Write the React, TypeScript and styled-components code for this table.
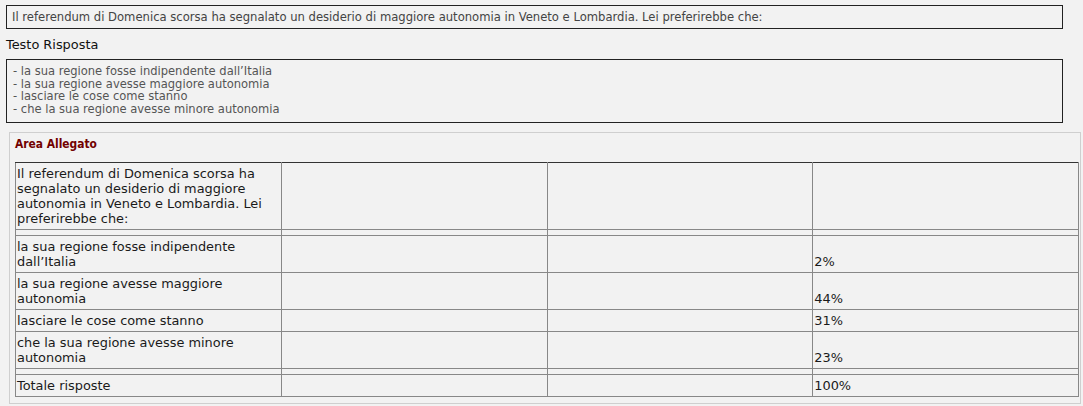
import React from "react";
import styled, { createGlobalStyle } from "styled-components";

const GlobalStyle = createGlobalStyle`
  body {
    margin: 0;
    background: #f2f2f2;
  }
`;

const Page = styled.div`
  padding: 5px 0 0 6px;
  width: 1077px;
  box-sizing: border-box;
`;

const QuestionBox = styled.div`
  width: 1057px;
  height: 24px;
  box-sizing: border-box;
  border: 1px solid #222;
  padding: 0 5px;
  font-family: "DejaVu Sans Condensed", "DejaVu Sans", sans-serif;
  font-size: 12.9px;
  line-height: 22px;
  color: #444;
  white-space: nowrap;
`;

const Label = styled.div`
  margin-top: 8px;
  height: 16px;
  font-family: "DejaVu Sans", sans-serif;
  font-size: 12.9px;
  line-height: 16px;
  color: #111;
`;

const AnswerBox = styled.div`
  margin-top: 6px;
  width: 1057px;
  height: 64px;
  box-sizing: border-box;
  border: 1px solid #222;
  padding: 5px 6px;
  font-family: "DejaVu Sans Condensed", "DejaVu Sans", sans-serif;
  font-size: 12.8px;
  line-height: 12.6px;
  color: #555;
`;

const Panel = styled.section`
  margin: 9px 0 0 3px;
  width: 1072px;
  height: 272px;
  box-sizing: border-box;
  border: 1px solid #cfcfcf;
  padding: 3px 0 0 5px;
`;

const PanelTitle = styled.h3`
  margin: 0;
  height: 26px;
  font-family: "DejaVu Sans Condensed", "DejaVu Sans", sans-serif;
  font-weight: bold;
  font-size: 11.9px;
  line-height: 16px;
  color: #720000;
`;

const Table = styled.table`
  width: 1064px;
  border-collapse: collapse;
  border: 1px solid #333;
  table-layout: fixed;
  font-family: "DejaVu Sans", sans-serif;
  font-size: 12.9px;
  line-height: 15px;
  color: #1a1a1a;
`;

const Row = styled.tr<{ $dark?: boolean }>`
  td {
    border-top-color: ${p => (p.$dark ? "#333" : "#888")};
  }
`;

const Cell = styled.td`
  border: 1px solid #888;
  padding: 3px 1px;
  vertical-align: bottom;
  overflow: hidden;
`;

const Spacer = styled.td`
  border: 1px solid #888;
  padding: 0;
  height: 5px;
`;

const answers = [
  { text: "la sua regione fosse indipendente dall’Italia", pct: "2%" },
  { text: "la sua regione avesse maggiore autonomia", pct: "44%" },
  { text: "lasciare le cose come stanno", pct: "31%" },
  { text: "che la sua regione avesse minore autonomia", pct: "23%" },
];

const question =
  "Il referendum di Domenica scorsa ha segnalato un desiderio di maggiore autonomia in Veneto e Lombardia. Lei preferirebbe che:";

const SpacerRow = () => (
  <tr>
    <Spacer />
    <Spacer />
    <Spacer />
    <Spacer />
  </tr>
);

export default function App() {
  return (
    <>
      <GlobalStyle />
      <Page>
        <QuestionBox>{question}</QuestionBox>
        <Label>Testo Risposta</Label>
        <AnswerBox>
          {answers.map(a => (
            <div key={a.text}>- {a.text}</div>
          ))}
        </AnswerBox>
        <Panel>
          <PanelTitle>Area Allegato</PanelTitle>
          <Table>
            <tbody>
              <Row $dark>
                <Cell>{question}</Cell>
                <Cell />
                <Cell />
                <Cell />
              </Row>
              <SpacerRow />
              {answers.map(a => (
                <Row key={a.text}>
                  <Cell>{a.text}</Cell>
                  <Cell />
                  <Cell />
                  <Cell>{a.pct}</Cell>
                </Row>
              ))}
              <SpacerRow />
              <Row $dark>
                <Cell>Totale risposte</Cell>
                <Cell />
                <Cell />
                <Cell>100%</Cell>
              </Row>
            </tbody>
          </Table>
        </Panel>
      </Page>
    </>
  );
}
